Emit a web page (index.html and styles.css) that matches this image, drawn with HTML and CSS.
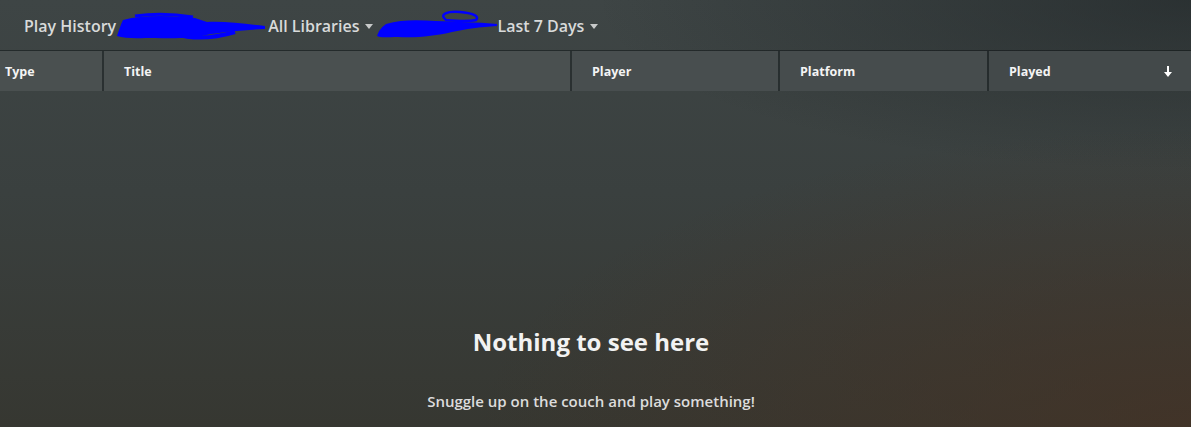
FILE: index.html
```html
<!doctype html>
<html lang="en">
  <head>
    <meta charset="UTF-8" />
    <meta name="viewport" content="width=device-width, initial-scale=1.0" />
    <title>Play History</title>
    <link rel="stylesheet" href="styles.css">
  </head>
  <body>
    <div class="page">
      <div class="toolbar">
        <span class="toolbar-title">Play History</span>
        <svg class="scribble scribble-one" width="153" height="30" viewBox="0 0 153 30">
          <path d="M8 8 C30 2 60 4 80 6 L92 10 C110 9 130 12 150 14 L150 17 C128 18 110 20 96 22 C80 26 60 27 40 26 C24 26 10 27 2 24 C4 18 6 12 8 8 Z" fill="#0000ff"/>
          <path d="M20 4 C40 1 60 2 78 5" stroke="#0000ff" stroke-width="3" fill="none"/>
          <path d="M60 22 C80 28 100 26 120 20" stroke="#0000ff" stroke-width="4" fill="none"/>
        </svg>
        <span class="filter">All Libraries <span class="caret"></span></span>
        <svg class="scribble scribble-two" width="121" height="30" viewBox="0 0 121 30">
          <path d="M10 14 C26 9 44 10 60 11 C80 12 100 12 121 14 L121 16 C104 17 90 19 76 22 C60 26 40 28 22 27 C12 27 4 28 1 26 C3 20 6 17 10 14 Z" fill="#0000ff"/>
          <path d="M70 10 C62 4 72 1 84 2 C96 3 104 6 100 10 C92 12 80 11 70 10 Z" stroke="#0000ff" stroke-width="2.5" fill="none"/>
        </svg>
        <span class="filter">Last 7 Days <span class="caret"></span></span>
      </div>

      <div class="table-head">
        <div class="col col-type">Type</div>
        <div class="col">Title</div>
        <div class="col">Player</div>
        <div class="col">Platform</div>
        <div class="col col-played">Played
          <svg class="sort-arrow" width="10" height="11" viewBox="0 0 10 11">
            <path d="M4 0 H6 V6 H9 L5 11 L1 6 H4 Z" fill="#ffffff"/>
          </svg>
        </div>
      </div>

      <div class="empty">
        <h1 class="empty-title">Nothing to see here</h1>
        <p class="empty-text">Snuggle up on the couch and play something!</p>
      </div>
    </div>
  </body>
</html>
```

FILE: styles.css
```css
* {
  margin: 0;
  padding: 0;
  box-sizing: border-box;
}
html,
body {
  height: 100%;
}
body {
  font-family: "Open Sans", "Noto Sans", sans-serif;
  color: #eee;
  overflow: hidden;
  background:
    radial-gradient(ellipse 60% 70% at 100% 100%, rgba(70, 50, 36, 0.7), rgba(70, 50, 36, 0) 100%),
    radial-gradient(ellipse 50% 40% at 100% 0%, rgba(30, 36, 38, 0.6), rgba(30, 36, 38, 0) 100%),
    linear-gradient(180deg, #3e4545 0%, #3a403f 45%, #363731 100%);
}
.page {
  height: 100vh;
  display: flex;
  flex-direction: column;
}
.toolbar {
  height: 50px;
  display: flex;
  align-items: center;
  padding-left: 24px;
  padding-top: 2px;
  color: #d8dada;
  font-size: 16px;
  font-weight: 600;
}
.scribble {
  display: block;
}
.scribble-one {
  margin-left: -1px;
  margin-top: 2px;
}
.scribble-two {
  margin-left: 3px;
  margin-top: -2px;
}
.filter {
  display: flex;
  align-items: center;
}
.caret {
  display: inline-block;
  margin-left: 6px;
  width: 0;
  height: 0;
  border-left: 4px solid transparent;
  border-right: 4px solid transparent;
  border-top: 5px solid #c8caca;
}
.table-head {
  height: 41px;
  display: grid;
  grid-template-columns: 102px 466px 206px 207px 1fr;
  column-gap: 2px;
  background: rgba(20, 26, 28, 0.45);
  border-top: 1px solid rgba(0, 0, 0, 0.12);
}
.col {
  display: flex;
  align-items: center;
  padding-left: 20px;
  font-size: 12.5px;
  font-weight: 700;
  color: #f4f4f4;
  background: #4a5050;
}
.col-type {
  padding-left: 5px;
}
.table-head .col:nth-child(3) {
  background: #484e4f;
}
.table-head .col:nth-child(4) {
  background: #464c4d;
}
.col-played {
  background: #43494a !important;
  justify-content: space-between;
  padding-right: 18px;
}
.sort-arrow {
  display: block;
}
.empty {
  flex: 1;
  display: flex;
  flex-direction: column;
  align-items: center;
  padding-top: 235px;
  padding-right: 9px;
}
.empty-title {
  font-size: 24px;
  font-weight: 700;
  color: #f2f2f2;
  line-height: 32px;
}
.empty-text {
  margin-top: 33px;
  font-size: 15px;
  font-weight: 600;
  color: #dcdcdc;
}
```
